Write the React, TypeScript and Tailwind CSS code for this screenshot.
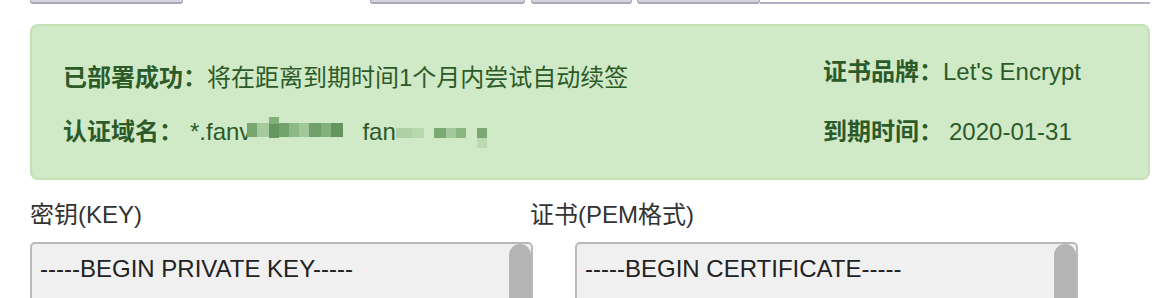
import React from 'react';

const font = { fontFamily: '"Liberation Sans", "Noto Sans CJK SC", sans-serif' };

type Cell = { w: number; h: number; mt: number; bg: string };

// pixelated (masked) part of the domain names
function Mosaic({ cols }: { cols: Cell[][] }) {
  return (
    <span className="inline-flex h-[30px] items-start align-top">
      {cols.map((col, i) => (
        <span key={i} className="flex flex-col" style={{ width: col[0].w }}>
          {col.map((c, j) => (
            <span key={j} style={{ height: c.h, marginTop: c.mt, background: c.bg }} />
          ))}
        </span>
      ))}
    </span>
  );
}

const mask1: Cell[][] = [
  [{ w: 10, h: 14, mt: 6, bg: '#76a770' }],
  [{ w: 12, h: 14, mt: 6, bg: '#a6ca9d' }],
  [
    { w: 10, h: 7, mt: 0, bg: '#80af7a' },
    { w: 10, h: 14, mt: 0, bg: '#659760' },
  ],
  [{ w: 10, h: 14, mt: 6, bg: '#72a36c' }],
  [{ w: 10, h: 14, mt: 6, bg: '#8cb985' }],
  [{ w: 10, h: 14, mt: 6, bg: '#a2c79a' }],
  [{ w: 12, h: 14, mt: 6, bg: '#70a16a' }],
  [{ w: 10, h: 14, mt: 6, bg: '#83b27d' }],
  [{ w: 12, h: 14, mt: 6, bg: '#65965f' }],
];

const mask2: Cell[][] = [
  [{ w: 16, h: 10, mt: 11, bg: '#afd0a5' }],
  [{ w: 12, h: 10, mt: 11, bg: '#b9d7af' }],
  [{ w: 10, h: 10, mt: 11, bg: 'transparent' }],
  [{ w: 12, h: 10, mt: 11, bg: '#7aaa73' }],
  [{ w: 10, h: 10, mt: 11, bg: '#a4c89b' }],
  [{ w: 10, h: 10, mt: 11, bg: '#89b782' }],
  [{ w: 11, h: 10, mt: 11, bg: 'transparent' }],
  [
    { w: 10, h: 10, mt: 11, bg: '#7ba875' },
    { w: 10, h: 10, mt: 0, bg: '#bcdab2' },
  ],
];

function CodeBox({ text }: { text: string }) {
  return (
    <div className="relative w-[503px] h-[120px] border-2 border-[#b9b9b9] bg-[#f0f0f0] rounded-[5px] overflow-hidden">
      <div className="pl-[8px] pt-[10px] text-[24px] leading-[30px] text-[#222]">{text}</div>
      <div className="absolute right-0 top-0 w-[22px] h-[140px] rounded-full bg-[#b4b4b4]" />
    </div>
  );
}

export default function App() {
  return (
    <div className="w-[1154px] h-[298px] overflow-hidden bg-white" style={font}>
      {/* bottom edge of the tab bar above */}
      <div className="flex h-[5px]">
        <div className="ml-[30px] w-[153px] h-[4px] bg-[#d5d5dd] border-x border-b-2 border-[#a9a8ba] rounded-b-[3px]" />
        <div className="ml-[187px] flex h-[4px]">
          <div className="w-[155px] bg-[#d3d3db] border-x border-b-2 border-[#a9a8ba] rounded-b-[3px]" />
          <div className="ml-[6px] w-[101px] bg-[#d3d3db] border-x border-b-2 border-[#a9a8ba] rounded-b-[3px]" />
          <div className="ml-[5px] w-[123px] bg-[#d3d3db] border-x border-b-2 border-[#a9a8ba] rounded-b-[3px]" />
        </div>
        <div className="w-[390px] h-[4px] border-b-2 border-[#b3b1c3]" />
      </div>

      <div className="ml-[30px] mt-[19px] w-[1120px] h-[156px] flex px-[31px] border-2 border-[#c3e1b5] bg-[#d0e9c6] rounded-[8px] text-[24px] leading-[30px] text-[#2c5b29]">
        <div className="flex-1 pt-[37px]">
          <div className="whitespace-nowrap">
            <span className="font-bold">已部署成功：</span>将在距离到期时间1个月内尝试自动续签
          </div>
          <div className="mt-[24px] flex whitespace-nowrap">
            <span className="font-bold">认证域名：</span>
            <span className="ml-[7px]">*.fanv</span>
            <span className="-ml-[4px]">
              <Mosaic cols={mask1} />
            </span>
            <span className="ml-[19px]">fan</span>
            <Mosaic cols={mask2} />
          </div>
        </div>
        <div className="w-[294px] pt-[31px]">
          <div className="whitespace-nowrap">
            <span className="font-bold">证书品牌：</span>Let's Encrypt
          </div>
          <div className="mt-[30px] whitespace-nowrap">
            <span className="font-bold">到期时间：</span>
            <span className="ml-[6px]">2020-01-31</span>
          </div>
        </div>
      </div>

      <div className="flex pl-[30px] mt-[20px] text-[#333]">
        <div className="w-[500px]">
          <div className="text-[24px] leading-[30px]">密钥(KEY)</div>
          <div className="mt-[12px]">
            <CodeBox text="-----BEGIN PRIVATE KEY-----" />
          </div>
        </div>
        <div>
          <div className="text-[24px] leading-[30px]">证书(PEM格式)</div>
          <div className="mt-[12px] ml-[45px]">
            <CodeBox text="-----BEGIN CERTIFICATE-----" />
          </div>
        </div>
      </div>
    </div>
  );
}
